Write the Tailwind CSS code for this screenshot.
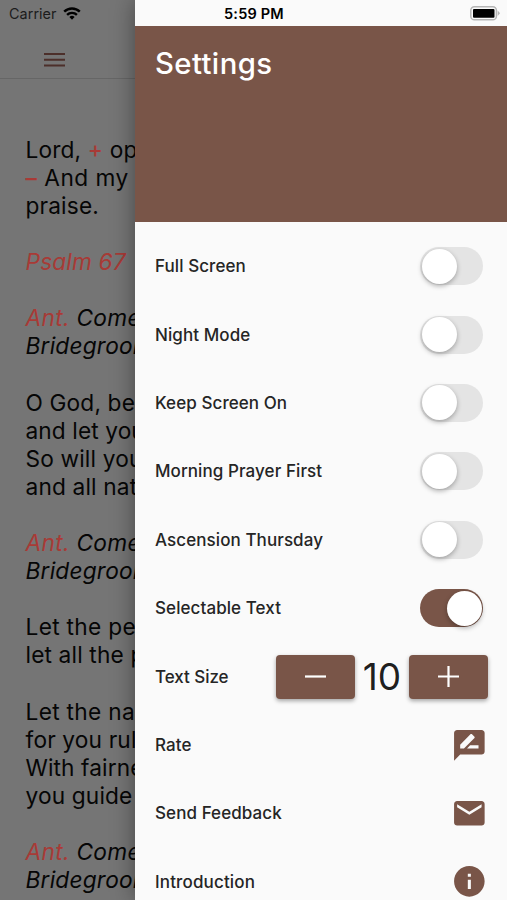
<!DOCTYPE html>
<html lang="en">
<head>
    <meta charset="UTF-8">
    <meta name="viewport" content="width=device-width, initial-scale=1.0">
    <title>Settings</title>
    <script src="https://cdn.jsdelivr.net/npm/@tailwindcss/browser@4"></script>
</head>
<body class="bg-[#757575] font-['Inter',sans-serif] overflow-hidden">
    <div class="relative w-[507px] h-[900px] overflow-hidden">
        <!-- Prayer page, dimmed behind the drawer -->
        <main class="h-full text-[#060606]">
            <div class="h-[26px] pl-[9px] flex items-center gap-[6px] text-[#1c1c1c]">
                <span class="text-[14.4px] tracking-[0.05px] leading-[26px] pt-[1px]">Carrier</span>
                <svg class="w-[18px] h-[13px]" viewBox="0 0 19 14" fill="none" stroke="#000" stroke-width="2.6">
                    <path d="M1.1 5.1a12 12 0 0 1 16.8 0"/>
                    <path d="M4.2 8.5a7.6 7.6 0 0 1 10.6 0"/>
                    <path d="M9.5 13.7 6.700 10.900a4 4 0 0 1 5.600 0z" fill="#000" stroke="none"/>
                </svg>
            </div>
            <header class="h-[53px] border-b border-[#666] pl-[44px] flex items-center pt-[15px]">
                <svg class="w-[21px] h-[14px]" viewBox="0 0 21 14" fill="#4c2f2a">
                    <path d="M0 0h21v2H0zM0 5.700h21v2H0zM0 11.400h21v2H0z"/>
                </svg>
            </header>
            <div class="pt-[56.8px] pl-[25.5px] text-[22.7px] leading-[28.1px] tracking-[0.15px] whitespace-nowrap">
                <p>Lord, <span class="text-[#a83a36] font-medium">+</span> open</p>
                <p class="tracking-[0.5px]"><span class="text-[#a83a36] font-medium">–</span> And my</p>
                <p>praise.</p>
                <p class="mt-[28.1px] italic text-[#a83a36]">Psalm 67</p>
                <p class="mt-[28.1px] italic tracking-[0.3px]"><span class="text-[#a83a36]">Ant.</span> Come</p>
                <p class="italic tracking-[0.2px]">Bridegroom</p>
                <p class="mt-[28.1px]">O God, be</p>
                <p class="tracking-[0.1px]">and let your</p>
                <p>So will your</p>
                <p>and all nat</p>
                <p class="mt-[28.1px] italic tracking-[0.3px]"><span class="text-[#a83a36]">Ant.</span> Come</p>
                <p class="italic tracking-[0.2px]">Bridegroom</p>
                <p class="mt-[28.1px] tracking-[0.3px]">Let the pe</p>
                <p class="tracking-[0.15px]">let all the p</p>
                <p class="mt-[28.1px] tracking-[0.3px]">Let the na</p>
                <p>for you rul</p>
                <p class="tracking-[0.1px]">With fairne</p>
                <p>you guide</p>
                <p class="mt-[28.1px] italic tracking-[0.3px]"><span class="text-[#a83a36]">Ant.</span> Come</p>
                <p class="italic tracking-[0.2px]">Bridegroom</p>
            </div>
        </main>

        <!-- Settings drawer -->
        <aside class="absolute top-0 right-0 w-[372px] h-full bg-[#fafafa] shadow-[0_0_22px_rgba(0,0,0,0.4)] text-[#252525]">
            <div class="h-[26px] pl-[89px] pr-[7px] flex items-center justify-between text-black">
                <span class="text-[14.5px] font-semibold tracking-[0.2px] pt-[1px]">5:59 PM</span>
                <svg class="w-[30px] h-[15px]" viewBox="0 0 30 15">
                    <rect x="0.8" y="0.8" width="25.6" height="13" rx="3.6" fill="#fafafa" stroke="#b5b5b5" stroke-width="1.5"/>
                    <rect x="3" y="3" width="21.5" height="8.7" rx="1" fill="#000"/>
                    <path d="M27.7 4.6 30 7.3 27.7 10z" fill="#b5b5b5"/>
                </svg>
            </div>
            <div class="h-[196px] bg-[#795548] pl-[20px] pt-[19px] text-[29.3px] leading-[37px] tracking-[0.4px] font-medium text-white">Settings</div>

            <div class="pt-[10px] pl-[20px] text-[17px] font-medium tracking-[0.08px]">
                <div class="h-[68.4px] pr-[24px] flex items-center justify-between">
                    <span class="pt-[1.5px]">Full Screen</span>
                    <div class="w-[63px] h-[38px] p-[1.5px] rounded-full bg-[#e4e4e4]"><div class="size-[35px] rounded-full bg-white shadow-[0_2px_5px_rgba(0,0,0,0.3)]"></div></div>
                </div>
                <div class="h-[68.4px] pr-[24px] flex items-center justify-between">
                    <span class="pt-[1.5px]">Night Mode</span>
                    <div class="w-[63px] h-[38px] p-[1.5px] rounded-full bg-[#e4e4e4]"><div class="size-[35px] rounded-full bg-white shadow-[0_2px_5px_rgba(0,0,0,0.3)]"></div></div>
                </div>
                <div class="h-[68.4px] pr-[24px] flex items-center justify-between">
                    <span class="pt-[1.5px]">Keep Screen On</span>
                    <div class="w-[63px] h-[38px] p-[1.5px] rounded-full bg-[#e4e4e4]"><div class="size-[35px] rounded-full bg-white shadow-[0_2px_5px_rgba(0,0,0,0.3)]"></div></div>
                </div>
                <div class="h-[68.4px] pr-[24px] flex items-center justify-between">
                    <span class="pt-[1.5px]">Morning Prayer First</span>
                    <div class="w-[63px] h-[38px] p-[1.5px] rounded-full bg-[#e4e4e4]"><div class="size-[35px] rounded-full bg-white shadow-[0_2px_5px_rgba(0,0,0,0.3)]"></div></div>
                </div>
                <div class="h-[68.4px] pr-[24px] flex items-center justify-between">
                    <span class="pt-[1.5px]">Ascension Thursday</span>
                    <div class="w-[63px] h-[38px] p-[1.5px] rounded-full bg-[#e4e4e4]"><div class="size-[35px] rounded-full bg-white shadow-[0_2px_5px_rgba(0,0,0,0.3)]"></div></div>
                </div>
                <div class="h-[68.4px] pr-[24px] flex items-center justify-between">
                    <span class="pt-[1.5px]">Selectable Text</span>
                    <div class="w-[63px] h-[38px] p-[1.5px] rounded-full bg-[#795548] flex justify-end"><div class="size-[35px] rounded-full bg-white shadow-[0_2px_5px_rgba(0,0,0,0.3)]"></div></div>
                </div>
                <div class="h-[68.4px] pr-[19px] flex items-center">
                    <span class="flex-1 pt-[1.5px] tracking-[-0.05px]">Text Size</span>
                    <button class="w-[79px] h-[44px] rounded-[4px] bg-[#795548] shadow-[0_2px_4px_rgba(0,0,0,0.35)] flex items-center justify-center">
                        <svg class="w-[21px] h-[21px]" viewBox="0 0 21 21" stroke="#fff" stroke-width="2.2"><path d="M0 10.500h21"/></svg>
                    </button>
                    <span class="w-[54px] pt-[1px] text-center text-[37px] font-normal text-black/90">10</span>
                    <button class="w-[79px] h-[44px] rounded-[4px] bg-[#795548] shadow-[0_2px_4px_rgba(0,0,0,0.35)] flex items-center justify-center">
                        <svg class="w-[21px] h-[21px]" viewBox="0 0 21 21" stroke="#fff" stroke-width="2.2"><path d="M0 10.500h21M10.500 0v21"/></svg>
                    </button>
                </div>
                <div class="h-[68.4px] pr-[19.5px] flex items-center justify-between">
                    <span class="pt-[1.5px]">Rate</span>
                    <svg class="size-[36.7px]" viewBox="0 0 24 24" fill="#795548"><path d="M20 2H4c-1.100 0-1.990.9-1.990 2L2 22l4-4h14c1.100 0 2-.9 2-2V4c0-1.100-.9-2-2-2zM6 14v-2.470l6.880-6.880c.2-.2.510-.2.710 0l1.770 1.770c.2.2.2.510 0 .710L8.470 14H6zm12 0h-7.500l2-2H18v2z"/></svg>
                </div>
                <div class="h-[68.4px] pr-[19.5px] flex items-center justify-between">
                    <span class="pt-[1.5px]">Send Feedback</span>
                    <svg class="size-[36.7px]" viewBox="0 0 24 24" fill="#795548"><path d="M20 4H4c-1.100 0-1.990.9-1.990 2L2 18c0 1.100.9 2 2 2h16c1.100 0 2-.9 2-2V6c0-1.100-.9-2-2-2zm0 4l-8 5-8-5V6l8 5 8-5v2z"/></svg>
                </div>
                <div class="h-[68.4px] pr-[19.5px] flex items-center justify-between">
                    <span class="pt-[1.5px] tracking-[0.15px]">Introduction</span>
                    <svg class="size-[36.7px]" viewBox="0 0 24 24" fill="#795548"><path d="M12 2C6.480 2 2 6.480 2 12s4.480 10 10 10 10-4.480 10-10S17.520 2 12 2zm1 15h-2v-6h2v6zm0-8h-2V7h2v2z"/></svg>
                </div>
            </div>
        </aside>
    </div>
</body>
</html>
